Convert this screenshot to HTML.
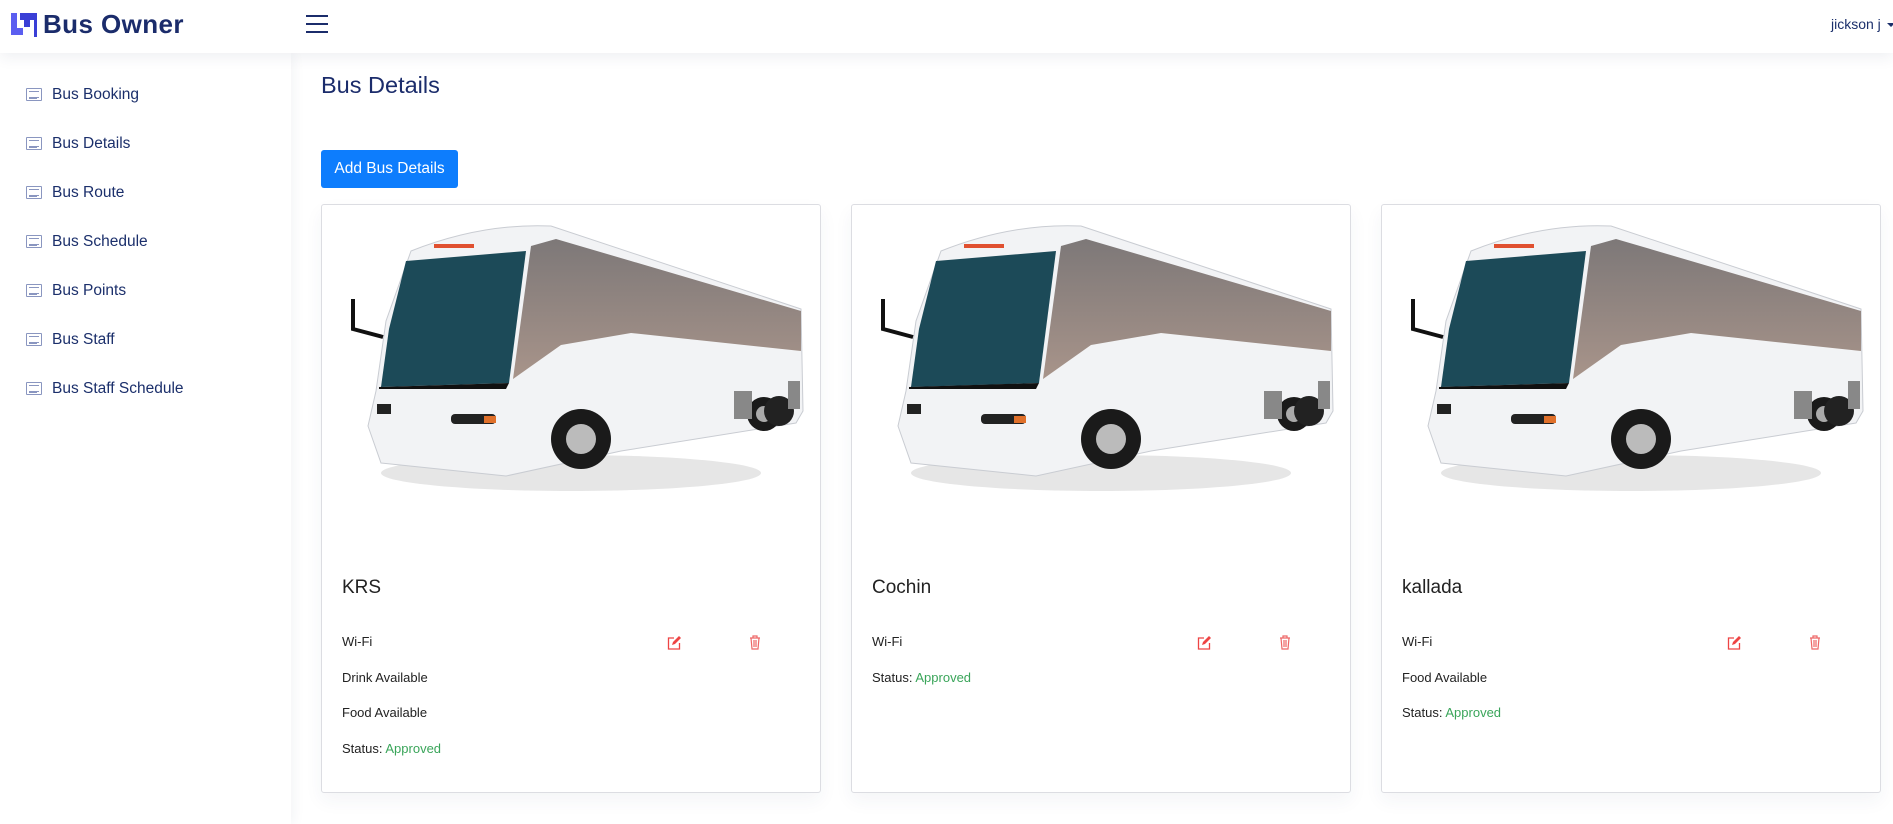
<!DOCTYPE html>
<html><head><meta charset="utf-8"><style>
*{margin:0;padding:0;box-sizing:border-box}
body{width:1893px;height:824px;overflow:hidden;background:#fff;font-family:"Liberation Sans",sans-serif;position:relative}
.hdr{position:absolute;left:0;top:0;width:1893px;height:53px;background:#fff;box-shadow:0 4px 14px rgba(40,50,90,.08);z-index:2}
.logo{position:absolute;left:43px;top:9px;font-size:26px;font-weight:bold;color:#1b2c6b;letter-spacing:.4px}
.side{position:absolute;left:0;top:53px;width:291px;height:771px;background:#fff;box-shadow:2px 0 12px rgba(40,50,90,.06)}
.item{position:absolute;left:52px;font-size:15.5px;color:#1b2f6b}
.ico{position:absolute;left:-26px;top:2px;width:16px;height:13px;border:1.3px solid #8a96c0;border-radius:1px}
.ico:before{content:"";position:absolute;left:2px;right:2px;top:2px;height:5px;border-top:1px solid #8a96c0;border-bottom:1px solid #8a96c0}
.ico:after{content:"";position:absolute;left:2px;right:4px;top:9px;border-top:1px solid #8a96c0}
h1{position:absolute;left:321px;top:72px;font-size:23.5px;font-weight:normal;color:#1b2c6b}
.btn{position:absolute;left:321px;top:150px;width:137px;height:38px;background:#0d7dfd;border-radius:3px;color:#fff;font-size:15.5px;text-align:center;line-height:38px}
.card{position:absolute;top:204px;width:500px;height:589px;border:1px solid #dcdde2;border-radius:3px;background:#fff;box-shadow:0 8px 18px rgba(40,50,90,.05)}
.card svg.bus{position:absolute;left:19px;top:6px}
.t{position:absolute;left:20px;top:372px;font-size:19px;color:#222}
.r{position:absolute;left:20px;font-size:13px;color:#222}
.g{color:#3aa55a}
.card svg.ed{position:absolute;left:345px;top:431px}
.card svg.tr{position:absolute;left:427px;top:430px}
</style></head><body>
<div class="hdr">
<svg style="position:absolute;left:11px;top:11px" width="26" height="26" viewBox="0 0 26 26"><path d="M0 2h6v15h6v7H0z" fill="#5b5ef0"/><path d="M9 2h17v24h-3V9h-4v7h-6V9H9z" fill="#3a3fd6"/></svg>
<div class="logo">Bus Owner</div>
<div style="position:absolute;left:306px;top:15px;width:22px;height:2px;background:#1b2c6b;box-shadow:0 8px 0 #1b2c6b,0 16px 0 #1b2c6b"></div>
<div style="position:absolute;left:1831px;top:16px;font-size:14px;color:#1b2f6b">jickson j</div>
<div style="position:absolute;left:1887px;top:23px;border:4px solid transparent;border-top:4px solid #1b2f6b"></div>
</div>
<div class="side">
<div class="item" style="top:33px"><span class="ico"></span>Bus Booking</div>
<div class="item" style="top:82px"><span class="ico"></span>Bus Details</div>
<div class="item" style="top:131px"><span class="ico"></span>Bus Route</div>
<div class="item" style="top:180px"><span class="ico"></span>Bus Schedule</div>
<div class="item" style="top:229px"><span class="ico"></span>Bus Points</div>
<div class="item" style="top:278px"><span class="ico"></span>Bus Staff</div>
<div class="item" style="top:327px"><span class="ico"></span>Bus Staff Schedule</div>
</div>
<h1>Bus Details</h1>
<div class="btn">Add Bus Details</div>

<svg width="0" height="0" style="position:absolute"><defs>
<linearGradient id="win" x1="0" y1="0" x2="0" y2="1"><stop offset="0" stop-color="#7d7878"/><stop offset="1" stop-color="#a8948a"/></linearGradient>
<g id="bus">
<ellipse cx="230" cy="262" rx="190" ry="18" fill="#e6e6e6"/>
<path d="M70 40Q140 12 210 15L460 98L462 200L455 212L280 240L165 265L40 252L27 215L35 180L45 110Z" fill="#f2f3f5" stroke="#c9ccd2"/>
<path d="M65 50L185 40L168 172L40 176L48 118Z" fill="#1c4a58"/>
<path d="M190 35L215 28L290 50L460 100L460 140L290 122L220 134L172 168Z" fill="url(#win)"/>
<path d="M38 176L168 172L165 178L38 178Z" fill="#111"/>
<path d="M12 88v30l30 8" stroke="#111" stroke-width="4" fill="none"/>
<rect x="93" y="33" width="40" height="4" fill="#e05030"/>
<circle cx="240" cy="228" r="30" fill="#1a1a1a"/><circle cx="240" cy="228" r="15" fill="#bbb"/>
<circle cx="423" cy="203" r="17" fill="#1a1a1a"/><circle cx="423" cy="203" r="8" fill="#aaa"/>
<circle cx="438" cy="200" r="15" fill="#222"/>
<rect x="110" y="203" width="45" height="10" rx="4" fill="#222"/><rect x="143" y="205" width="12" height="7" fill="#e0702a"/>
<rect x="36" y="193" width="14" height="10" fill="#222"/>
<rect x="393" y="180" width="18" height="28" fill="#888"/><rect x="447" y="170" width="12" height="28" fill="#888"/>
</g></defs></svg>

<div class="card" style="left:321px"><svg class="bus" width="480" height="300"><use href="#bus"/></svg>
<div class="t">KRS</div>
<div class="r" style="top:429px">Wi-Fi</div><div class="r" style="top:465px">Drink Available</div><div class="r" style="top:500px">Food Available</div><div class="r" style="top:536px">Status: <span class="g">Approved</span></div>
<svg class="ed" width="14" height="14" viewBox="0 0 14 14"><path d="M7 2H1.5v11h11V7" fill="none" stroke="#e44" stroke-width="1.3"/><path d="M5 9l1-3 6-6 2 2-6 6z" fill="#e44"/></svg>
<svg class="tr" width="12" height="15" viewBox="0 0 12 15"><path d="M1 3h10M4 3V1h4v2M2 3l1 11h6l1-11M5 5v7M7 5v7" fill="none" stroke="#e66" stroke-width="1.2"/></svg>
</div>
<div class="card" style="left:851px"><svg class="bus" width="480" height="300"><use href="#bus"/></svg>
<div class="t">Cochin</div>
<div class="r" style="top:429px">Wi-Fi</div><div class="r" style="top:465px">Status: <span class="g">Approved</span></div>
<svg class="ed" width="14" height="14" viewBox="0 0 14 14"><path d="M7 2H1.5v11h11V7" fill="none" stroke="#e44" stroke-width="1.3"/><path d="M5 9l1-3 6-6 2 2-6 6z" fill="#e44"/></svg>
<svg class="tr" width="12" height="15" viewBox="0 0 12 15"><path d="M1 3h10M4 3V1h4v2M2 3l1 11h6l1-11M5 5v7M7 5v7" fill="none" stroke="#e66" stroke-width="1.2"/></svg>
</div>
<div class="card" style="left:1381px"><svg class="bus" width="480" height="300"><use href="#bus"/></svg>
<div class="t">kallada</div>
<div class="r" style="top:429px">Wi-Fi</div><div class="r" style="top:465px">Food Available</div><div class="r" style="top:500px">Status: <span class="g">Approved</span></div>
<svg class="ed" width="14" height="14" viewBox="0 0 14 14"><path d="M7 2H1.5v11h11V7" fill="none" stroke="#e44" stroke-width="1.3"/><path d="M5 9l1-3 6-6 2 2-6 6z" fill="#e44"/></svg>
<svg class="tr" width="12" height="15" viewBox="0 0 12 15"><path d="M1 3h10M4 3V1h4v2M2 3l1 11h6l1-11M5 5v7M7 5v7" fill="none" stroke="#e66" stroke-width="1.2"/></svg>
</div>
</body></html>
